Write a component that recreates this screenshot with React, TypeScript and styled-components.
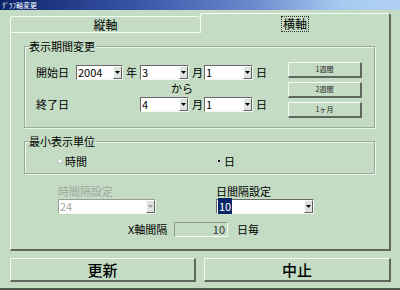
import React from "react";
import styled, { createGlobalStyle } from "styled-components";

const BG = "#c4dcc4";
const FONT = `"Noto Sans CJK JP", "Liberation Sans", sans-serif`;

// ─── Global ───────────────────────────────────────────────────────────────────

const GlobalStyle = createGlobalStyle`
  html, body { margin: 0; padding: 0; }
  body { background: ${BG}; font-family: ${FONT}; color: #000; }
`;

// ─── Frame ────────────────────────────────────────────────────────────────────

const Window = styled.div`
  width: 400px;
  height: 290px;
  box-sizing: border-box;
  background: ${BG};
  display: flex;
  flex-direction: column;
  overflow: hidden;
  border-bottom: 2px solid #4c544c;
`;

const TitleBar = styled.div`
  height: 10px;
  padding-left: 2px;
  background: linear-gradient(90deg, #0a246a 0%, #3b56a8 35%, #6a86cc 62%, #a6caf0 85%, #b0d0f2 100%);
  color: #fff;
  font-size: 7px;
  line-height: 10px;
  white-space: nowrap;
`;

const Body = styled.div`
  display: flex;
  flex-direction: column;
  padding: 0 9px 0 10px;
`;

// ─── Tabs ─────────────────────────────────────────────────────────────────────

const TabBar = styled.div`
  display: flex;
  height: 22px;
  align-items: flex-end;
`;

const Tab = styled.div<{ $active?: boolean }>`
  position: relative;
  z-index: ${({ $active }) => ($active ? 2 : 1)};
  width: ${({ $active }) => ($active ? 191 : 190)}px;
  height: ${({ $active }) => ($active ? 20 : 16)}px;
  margin-bottom: ${({ $active }) => ($active ? -1 : 0)}px;
  box-sizing: border-box;
  background: ${BG};
  border-top: 1px solid #f4fbf4;
  border-left: 1px solid #f4fbf4;
  border-right: ${({ $active }) => ($active ? "2px solid #5e665e" : "none")};
  border-radius: 3px 3px 0 0;
  display: flex;
  align-items: center;
  justify-content: center;
  font-size: 12px;
  line-height: 14px;
`;

const FocusText = styled.span`
  padding: 0 1px;
  outline: 1px dotted #333;
  outline-offset: 0;
`;

const Panel = styled.div`
  width: 381px;
  height: 219px;
  box-sizing: border-box;
  border-top: 1px solid #f4fbf4;
  border-left: 1px solid #f4fbf4;
  border-right: 2px solid #5e665e;
  border-bottom: 2px solid #5e665e;
  padding-left: 13px;
  display: flex;
  flex-direction: column;
`;

// ─── Group boxes ──────────────────────────────────────────────────────────────

const Group = styled.div<{ $h: number }>`
  position: relative;
  margin-top: 13px;
  width: 351px;
  height: ${({ $h }) => $h}px;
  box-sizing: border-box;
  border: 1px solid #98aa98;
  box-shadow: inset 1px 1px 0 #eef7ee, 1px 1px 0 #eef7ee;
  display: flex;
`;

const GroupLabel = styled.span`
  position: absolute;
  top: -8px;
  left: 3px;
  padding: 0 1px;
  background: ${BG};
  font-size: 11px;
  line-height: 14px;
`;

const PeriodGrid = styled.div`
  display: grid;
  grid-template-columns: 40px 47px 17px 49px 15px 49px auto;
  grid-template-rows: 15px 17px 15px;
  padding: 18px 0 0 11px;
  font-size: 11px;
  line-height: 15px;
`;

const Cell = styled.span<{ $col: number; $row: number; $span?: number }>`
  grid-column: ${({ $col, $span }) => `${$col} / span ${$span ?? 1}`};
  grid-row: ${({ $row }) => $row};
`;

const Unit = styled(Cell)`
  padding-left: 3px;
`;

const Kara = styled(Cell)`
  text-align: right;
  padding-right: 11px;
  line-height: 17px;
`;

const PresetColumn = styled.div`
  margin-left: auto;
  margin-right: 12px;
  padding-top: 15px;
  display: flex;
  flex-direction: column;
  gap: 4px;
`;

const SmallButton = styled.div`
  width: 74px;
  height: 16px;
  box-sizing: border-box;
  border-top: 1px solid #f4fbf4;
  border-left: 1px solid #f4fbf4;
  border-right: 2px solid #5e665e;
  border-bottom: 2px solid #5e665e;
  display: flex;
  align-items: center;
  justify-content: center;
  font-size: 7px;
  line-height: 9px;
  color: #222;
`;

// ─── Combo box ────────────────────────────────────────────────────────────────

const ComboFrame = styled.div<{ $w: number; $disabled?: boolean }>`
  width: ${({ $w }) => $w}px;
  height: 15px;
  box-sizing: border-box;
  display: flex;
  background: #fff;
  border-top: 1px solid ${({ $disabled }) => ($disabled ? "#9a9a9a" : "#6a6a6a")};
  border-left: 1px solid ${({ $disabled }) => ($disabled ? "#9a9a9a" : "#6a6a6a")};
  border-right: 1px solid #f4fbf4;
  border-bottom: 1px solid #f4fbf4;
`;

const ComboText = styled.div<{ $disabled?: boolean }>`
  flex: 1;
  min-width: 0;
  padding-left: 1px;
  font-size: 11px;
  line-height: 13px;
  color: ${({ $disabled }) => ($disabled ? "#a4a4a4" : "#000")};
  white-space: nowrap;
`;

const Highlight = styled.span`
  background: #0a246a;
  color: #fff;
  padding: 0 1px;
`;

const ComboArrow = styled.div<{ $disabled?: boolean }>`
  width: 9px;
  flex: none;
  box-sizing: border-box;
  background: #dfe3df;
  border-top: 1px solid #fff;
  border-left: 1px solid #fff;
  border-right: 1px solid #606060;
  border-bottom: 1px solid #606060;
  display: flex;
  align-items: center;
  justify-content: center;
  color: ${({ $disabled }) => ($disabled ? "#a0a0a0" : "#000")};
`;

const Combo: React.FC<{ w: number; value: string; disabled?: boolean; selected?: boolean }> = ({
  w,
  value,
  disabled,
  selected,
}) => (
  <ComboFrame $w={w} $disabled={disabled}>
    <ComboText $disabled={disabled}>{selected ? <Highlight>{value}</Highlight> : value}</ComboText>
    <ComboArrow $disabled={disabled}>
      <svg width="5" height="3" viewBox="0 0 5 3">
        <path d="M0 0h5L2.5 3z" fill="currentColor" />
      </svg>
    </ComboArrow>
  </ComboFrame>
);

// ─── Radio ────────────────────────────────────────────────────────────────────

const RadioRow = styled.div`
  display: flex;
  padding: 7px 0 0 32px;
  font-size: 11px;
  line-height: 13px;
`;

const RadioItem = styled.label`
  width: 159px;
  display: flex;
  align-items: center;
  gap: 2px;
`;

const RadioDot = styled.span<{ $checked?: boolean }>`
  width: 6px;
  height: 6px;
  box-sizing: border-box;
  border-radius: 50%;
  background: #fbfdfb;
  border: 1px solid #b0bcb0;
  display: flex;
  align-items: center;
  justify-content: center;

  &::after {
    content: "";
    width: 2px;
    height: 2px;
    background: ${({ $checked }) => ($checked ? "#000" : "transparent")};
  }
`;

// ─── Interval settings ────────────────────────────────────────────────────────

const IntervalRow = styled.div`
  display: flex;
  margin: 11px 0 0 34px;
`;

const IntervalCol = styled.div`
  width: 158px;
  display: flex;
  flex-direction: column;
  gap: 1px;
`;

const FieldLabel = styled.span<{ $disabled?: boolean }>`
  font-size: 11px;
  line-height: 13px;
  color: ${({ $disabled }) => ($disabled ? "#9ea89e" : "#000")};
`;

const AxisRow = styled.div`
  display: flex;
  align-items: center;
  margin: 8px 0 0 104px;
  font-size: 11px;
  line-height: 15px;
`;

const AxisLabel = styled.span`
  width: 46px;
`;

const ReadOnlyBox = styled.div`
  width: 54px;
  height: 15px;
  box-sizing: border-box;
  border-top: 1px solid #8e968e;
  border-left: 1px solid #8e968e;
  border-right: 1px solid #f4fbf4;
  border-bottom: 1px solid #f4fbf4;
  text-align: right;
  padding-right: 2px;
  line-height: 13px;
  color: #333;
`;

const AxisUnit = styled.span`
  margin-left: 9px;
`;

// ─── Footer buttons ───────────────────────────────────────────────────────────

const Footer = styled.div`
  display: flex;
  gap: 8px;
  margin-top: 7px;
`;

const BigButton = styled.div<{ $w: number }>`
  width: ${({ $w }) => $w}px;
  height: 24px;
  box-sizing: border-box;
  border-top: 1px solid #f4fbf4;
  border-left: 1px solid #f4fbf4;
  border-right: 2px solid #5e665e;
  border-bottom: 2px solid #5e665e;
  display: flex;
  align-items: center;
  justify-content: center;
  font-size: 15px;
  line-height: 18px;
  font-weight: 500;
`;

// ─── Component ────────────────────────────────────────────────────────────────

export default function App() {
  return (
    <>
      <GlobalStyle />
      <Window>
        <TitleBar>ｸﾞﾗﾌ軸変更</TitleBar>
        <Body>
          <TabBar>
            <Tab>縦軸</Tab>
            <Tab $active>
              <FocusText>横軸</FocusText>
            </Tab>
          </TabBar>

          <Panel>
            <Group $h={82}>
              <GroupLabel>表示期間変更</GroupLabel>
              <PeriodGrid>
                <Cell $col={1} $row={1}>開始日</Cell>
                <Cell $col={2} $row={1}><Combo w={47} value="2004" /></Cell>
                <Unit $col={3} $row={1}>年</Unit>
                <Cell $col={4} $row={1}><Combo w={49} value="3" /></Cell>
                <Unit $col={5} $row={1}>月</Unit>
                <Cell $col={6} $row={1}><Combo w={49} value="1" /></Cell>
                <Unit $col={7} $row={1}>日</Unit>

                <Kara $col={4} $row={2} $span={2}>から</Kara>

                <Cell $col={1} $row={3}>終了日</Cell>
                <Cell $col={4} $row={3}><Combo w={49} value="4" /></Cell>
                <Unit $col={5} $row={3}>月</Unit>
                <Cell $col={6} $row={3}><Combo w={49} value="1" /></Cell>
                <Unit $col={7} $row={3}>日</Unit>
              </PeriodGrid>
              <PresetColumn>
                <SmallButton>1週間</SmallButton>
                <SmallButton>2週間</SmallButton>
                <SmallButton>1ヶ月</SmallButton>
              </PresetColumn>
            </Group>

            <Group $h={33}>
              <GroupLabel>最小表示単位</GroupLabel>
              <RadioRow>
                <RadioItem><RadioDot />時間</RadioItem>
                <RadioItem><RadioDot $checked />日</RadioItem>
              </RadioRow>
            </Group>

            <IntervalRow>
              <IntervalCol>
                <FieldLabel $disabled>時間隔設定</FieldLabel>
                <Combo w={98} value="24" disabled />
              </IntervalCol>
              <IntervalCol>
                <FieldLabel>日間隔設定</FieldLabel>
                <Combo w={98} value="10" selected />
              </IntervalCol>
            </IntervalRow>

            <AxisRow>
              <AxisLabel>X軸間隔</AxisLabel>
              <ReadOnlyBox>10</ReadOnlyBox>
              <AxisUnit>日毎</AxisUnit>
            </AxisRow>
          </Panel>

          <Footer>
            <BigButton $w={186}>更新</BigButton>
            <BigButton $w={187}>中止</BigButton>
          </Footer>
        </Body>
      </Window>
    </>
  );
}
